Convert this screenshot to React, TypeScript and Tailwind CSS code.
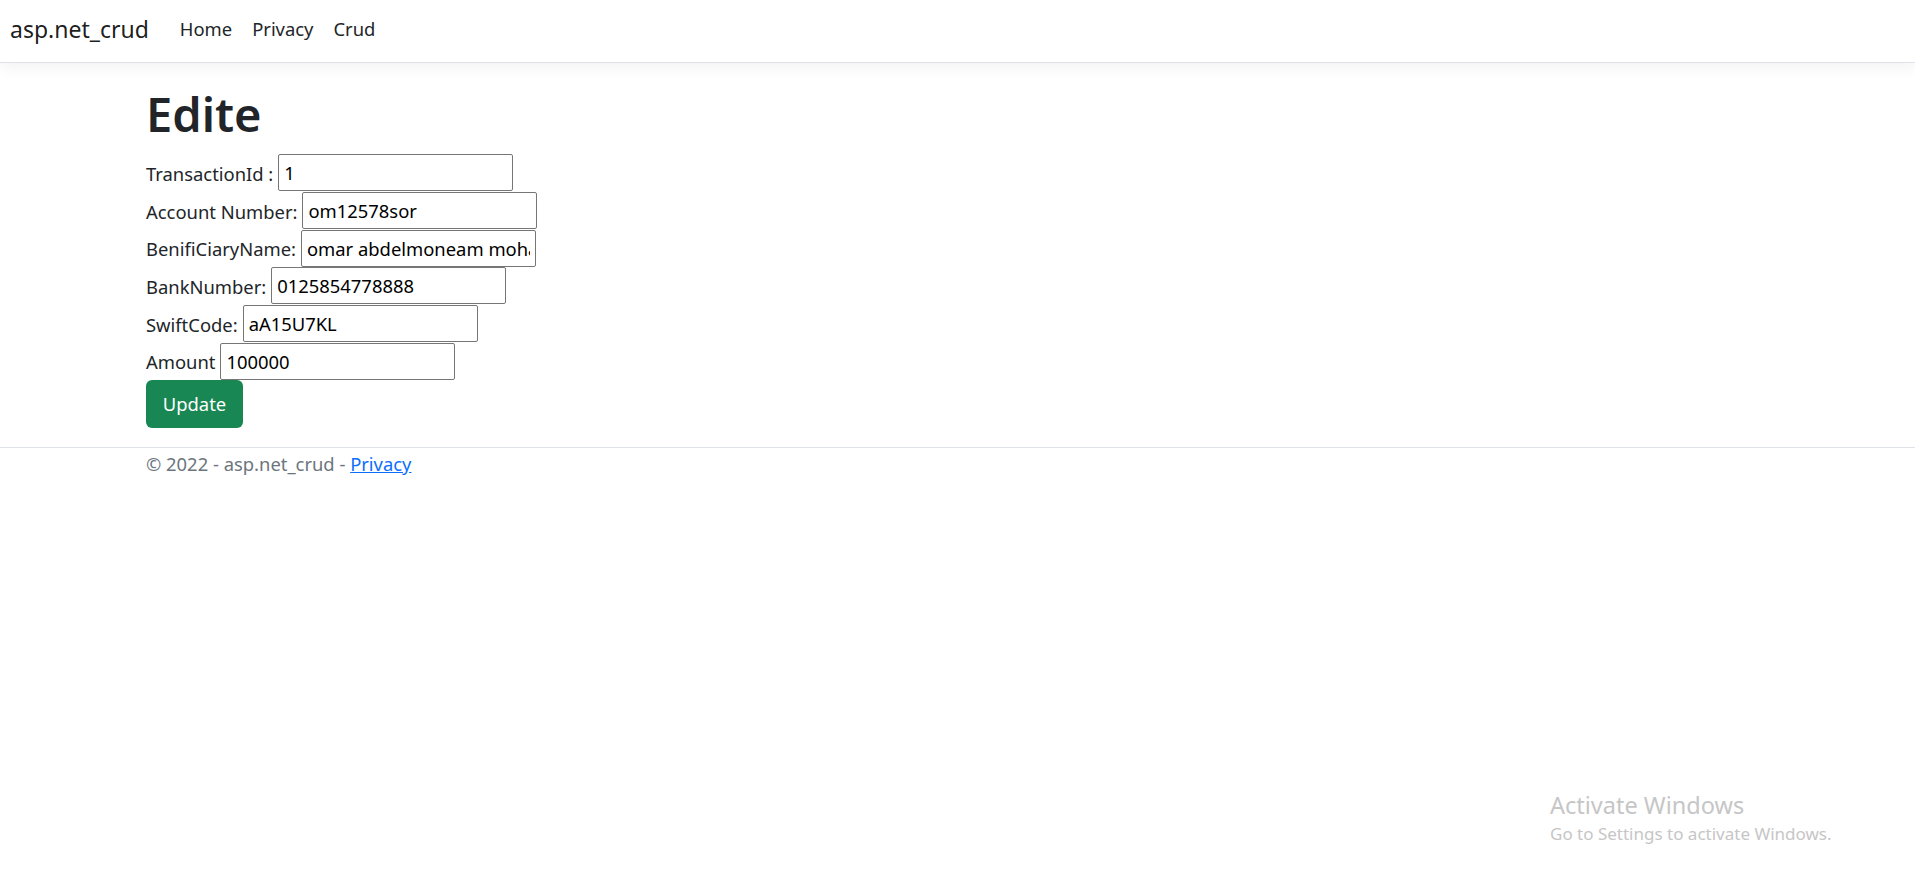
import React from 'react'

const fields: { label: string; value: string }[] = [
    { label: 'TransactionId :', value: '1' },
    { label: 'Account Number:', value: 'om12578sor' },
    { label: 'BenifiCiaryName:', value: 'omar abdelmoneam mohamed' },
    { label: 'BankNumber:', value: '0125854778888' },
    { label: 'SwiftCode:', value: 'aA15U7KL' },
    { label: 'Amount', value: '100000' },
]

export default function App(): React.ReactElement {
    return (
        <div className="relative min-h-[879px] bg-white text-[#212529] font-['Noto_Sans',sans-serif]">
            <nav className="h-[63px] border-b border-[#dee2e6] shadow-[0_5px_15px_rgba(0,0,0,0.05)] bg-white flex items-center px-[10px]">
                <a className="text-[23px] text-black/90 mr-[31px] leading-none pb-[4px]">asp.net_crud</a>
                <div className="flex gap-[20px] text-[18.4px] text-[#212529] leading-none pb-[4px]">
                    <a>Home</a>
                    <a>Privacy</a>
                    <a>Crud</a>
                </div>
            </nav>

            <main className="pl-[146px] pt-[21px] pb-[19px]">
                <h1 className="text-[47px] font-semibold leading-[60px] mb-[10px]">Edite</h1>
                <form className="flex flex-col text-[18.4px]">
                    {fields.map((f) => (
                        <div key={f.label} className="flex items-center h-[37.7px]">
                            <label className="mr-[5px] pt-[2px]">{f.label}</label>
                            <input
                                readOnly
                                value={f.value}
                                className="w-[235px] h-[37px] border border-[#767676] rounded-[2px] px-[5px] text-black text-[18.4px] outline-none"
                            />
                        </div>
                    ))}
                    <div>
                        <button
                            type="button"
                            className="w-[97px] h-[48px] rounded-[6px] bg-[#198754] text-white text-[18.4px]"
                        >
                            Update
                        </button>
                    </div>
                </form>
            </main>

            <footer className="border-t border-[#dee2e6] pl-[146px] text-[18.4px] leading-[32px] text-[#6c757d]">
                © 2022 - asp.net_crud - <a className="text-[#0d6efd] underline">Privacy</a>
            </footer>

            <div className="absolute left-[1550px] top-[789px] text-[#c6c6c6] pointer-events-none">
                <div className="text-[23.5px] leading-[32px]">Activate Windows</div>
                <div className="text-[17px] leading-[24px] mt-[1px]">Go to Settings to activate Windows.</div>
            </div>
        </div>
    )
}
